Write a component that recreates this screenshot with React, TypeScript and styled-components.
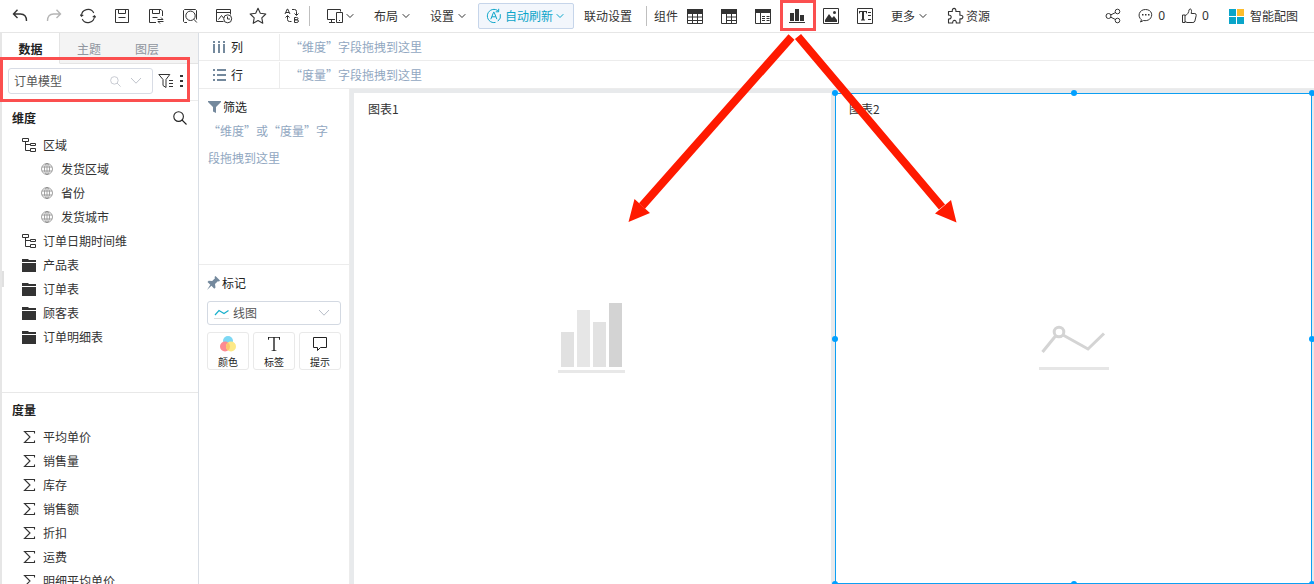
import React from "react";
import styled, { createGlobalStyle } from "styled-components";

const GlobalStyle = createGlobalStyle`
  * { box-sizing: border-box; }
  html, body, #root { height: 100%; }
  body {
    margin: 0;
    background: #fff;
    color: #333;
    font: 12px/18px "Noto Sans CJK SC", "Noto Sans", sans-serif;
    overflow: hidden;
  }
  button, input, select { font: inherit; color: inherit; }
  button { background: none; border: 0; padding: 0; cursor: pointer; }
  h2, ul, p { margin: 0; padding: 0; font-size: inherit; list-style: none; }
  svg { display: block; flex: none; }
`;

const Page = styled.div`
  position: relative;
  display: flex;
  flex-direction: column;
  height: 100%;
  border-left: 2px solid #e6e6e6;
`;

const Toolbar = styled.header`
  display: flex;
  align-items: center;
  flex: none;
  height: 33px;
  margin-left: -2px;
  padding: 0 16px 0 3px;
  background: #fff;
  border-bottom: 1px solid #e6e6e6;
  white-space: nowrap;
`;

const IconButton = styled.button<{ $muted?: boolean }>`
  display: flex;
  align-items: center;
  justify-content: center;
  flex: none;
  width: 34px;
  height: 32px;
  color: ${(p) => (p.$muted ? "#b5b5b5" : "#333")};
`;

const MenuButton = styled.button<{ $gap?: number }>`
  display: flex;
  align-items: center;
  gap: ${(p) => p.$gap ?? 4}px;
  flex: none;
  height: 26px;
  margin-right: 20px;
`;

const RefreshButton = styled(MenuButton)`
  gap: 3px;
  margin: 0 10px 0 -8px;
  padding: 0 9px 0 7px;
  color: #0aa5c9;
  background: #f2f6fc;
  border: 1px solid #c6d5ea;
  border-radius: 2px;
`;

const LinkageButton = styled(MenuButton)`
  margin-right: 14px;
`;

const Divider = styled.span`
  flex: none;
  width: 1px;
  height: 20px;
  background: #bfbfbf;
`;

const MenuGroup = styled.div`
  display: flex;
  padding-left: 17px;
`;

const Label = styled.span`
  padding-left: 7px;
`;

const Tools = styled.div`
  display: flex;
  margin-right: 9px;
`;

const ToolSlot = styled.div`
  position: relative;
`;

const Social = styled.div`
  display: flex;
  align-items: center;
  gap: 17px;
  margin-left: auto;
`;

const SocialButton = styled.button`
  display: flex;
  align-items: center;
  gap: 5px;
  font-family: "Noto Sans", sans-serif;
`;

const SmartButton = styled.button`
  display: flex;
  align-items: center;
  gap: 6px;
  margin-left: 3px;
`;

const Body = styled.div`
  display: flex;
  flex: 1;
  min-height: 0;
`;

const Sidebar = styled.aside`
  display: flex;
  flex-direction: column;
  flex: none;
  width: 197px;
  border-right: 1px solid #d9dee5;
`;

const Tabs = styled.div`
  display: flex;
  flex: none;
  height: 31px;
  background: #f4f4f4;
`;

const Tab = styled.button<{ $active?: boolean }>`
  width: 58px;
  padding-top: 2px;
  color: ${(p) => (p.$active ? "#222" : "#8f959e")};
  font-weight: ${(p) => (p.$active ? 700 : 400)};
  background: ${(p) => (p.$active ? "#fff" : "transparent")};
  border-bottom: 1px solid ${(p) => (p.$active ? "#fff" : "#e4e4e4")};
  border-right: ${(p) => (p.$active ? "1px solid #e4e4e4" : "0")};
`;

const TabsRest = styled.span`
  flex: 1;
  border-bottom: 1px solid #e4e4e4;
`;

const SourceRow = styled.div`
  display: flex;
  align-items: center;
  gap: 5px;
  flex: none;
  height: 37px;
  padding: 0 14px 2px 6px;
  border-bottom: 1px solid #ececec;
`;

const SourceBox = styled.div`
  display: flex;
  align-items: center;
  gap: 9px;
  flex: 1;
  min-width: 0;
  height: 26px;
  padding: 0 10px 0 5px;
  color: #c0c4cc;
  border: 1px solid #d8dce5;
  border-radius: 3px;
`;

const SourceInput = styled.input`
  flex: 1;
  min-width: 0;
  padding: 0;
  color: #555;
  background: none;
  border: 0;
  outline: 0;
`;

const PlainButton = styled.button`
  display: flex;
  flex: none;
`;

const Section = styled.section<{ $fixed?: boolean }>`
  flex: ${(p) => (p.$fixed ? "none" : "1")};
  height: ${(p) => (p.$fixed ? "292px" : "auto")};
  min-height: 0;
  overflow: hidden;
  border-bottom: ${(p) => (p.$fixed ? "1px solid #e8e8e8" : "0")};
`;

const SectionHead = styled.div`
  display: flex;
  align-items: center;
  justify-content: space-between;
  height: 32px;
  padding: 1px 11px 0 10px;
  color: #222;
`;

const Row = styled.li<{ $nested?: boolean }>`
  display: flex;
  align-items: center;
  gap: ${(p) => (p.$nested ? "8px" : "7px")};
  height: 24px;
  padding-left: ${(p) => (p.$nested ? "39px" : "20px")};
`;

const Work = styled.main`
  display: flex;
  flex-direction: column;
  flex: 1;
  min-width: 0;
`;

const Shelf = styled.div`
  display: flex;
  align-items: center;
  flex: none;
  height: 28px;
  border-bottom: 1px solid #ececec;
`;

const ShelfName = styled.div`
  display: flex;
  align-items: center;
  gap: 5px;
  width: 81px;
  height: 26px;
  padding-left: 13px;
  color: #222;
  border-right: 1px solid #ececec;
`;

const ShelfHint = styled.span`
  padding-left: 10px;
  color: #91a7c1;
`;

const Columns = styled.div`
  display: flex;
  flex: 1;
  min-height: 0;
`;

const Settings = styled.div`
  flex: none;
  width: 151px;
  border-right: 1px solid #ececec;
`;

const FilterBox = styled.section`
  height: 176px;
  padding: 8px 20px 0 9px;
  border-bottom: 1px solid #ececec;
`;

const BoxTitle = styled.h2`
  display: flex;
  align-items: center;
  gap: 2px;
  height: 20px;
  font-weight: 400;
  color: #222;
`;

const FilterHint = styled.p`
  line-height: 27px;
  color: #91a7c1;
`;

const MarkBox = styled.section`
  padding: 8px 8px 0 8px;
`;

const ChartType = styled.label`
  display: flex;
  align-items: center;
  height: 24px;
  margin-top: 8px;
  padding: 0 10px 0 6px;
  color: #b8bec9;
  border: 1px solid #d3d9e2;
  border-radius: 3px;
`;

const TypeSelect = styled.select`
  flex: 1;
  min-width: 0;
  padding: 0 0 0 3px;
  color: #555;
  background: none;
  border: 0;
  appearance: none;
`;

const MarkGrid = styled.div`
  display: grid;
  grid-template-columns: repeat(3, 1fr);
  gap: 4px;
  margin-top: 7px;
`;

const MarkButton = styled.button`
  display: flex;
  flex-direction: column;
  align-items: center;
  justify-content: space-between;
  height: 38px;
  padding-top: 2px;
  font-size: 10px;
  line-height: 14px;
  color: #222;
  border: 1px solid #e9e9e9;
  border-radius: 3px;
`;

const Canvas = styled.div`
  display: grid;
  grid-template-columns: 1fr 1fr;
  gap: 4px;
  flex: 1;
  min-width: 0;
  padding: 4px 2px 0 4px;
  background: #e8eaec;
`;

const ChartCard = styled.section<{ $selected?: boolean }>`
  position: relative;
  display: flex;
  flex-direction: column;
  background: #fff;
  box-shadow: ${(p) => (p.$selected ? "inset 0 0 0 1px #0d9ff2" : "none")};
`;

const ChartTitle = styled.h2`
  padding: 7px 14px 0;
  font-weight: 400;
`;

const Placeholder = styled.div`
  display: flex;
  align-items: center;
  justify-content: center;
  flex: 1;
  padding-bottom: 27px;
`;

const Handle = styled.i<{ $x: string; $y: string }>`
  position: absolute;
  left: ${(p) => p.$x};
  top: ${(p) => p.$y};
  width: 6px;
  height: 6px;
  margin: -3px;
  background: #00a0ff;
  border-radius: 50%;
`;

const Grip = styled.i`
  position: absolute;
  left: 0;
  top: 271px;
  width: 2px;
  height: 16px;
  background: #e0e0e0;
`;

const SourceFrame = styled.div`
  position: absolute;
  left: -2px;
  top: 57px;
  width: 190px;
  height: 45px;
  border: 3px solid #fb4f4f;
  pointer-events: none;
`;

const ToolFrame = styled.span`
  position: absolute;
  left: 0;
  top: 0;
  width: 36px;
  height: 31px;
  border: 3px solid #fb4f4f;
  pointer-events: none;
`;

const Arrows = styled.svg`
  position: absolute;
  left: -160px;
  top: 33px;
  z-index: 2;
  pointer-events: none;
`;

type IconProps = { w?: number; h?: number; sw?: number; children: React.ReactNode };

const Icon = ({ w = 16, h = 16, sw = 1, children }: IconProps) => (
  <svg width={w} height={h} viewBox={`0 0 ${w} ${h}`} fill="none" stroke="currentColor" strokeWidth={sw} aria-hidden="true">
    {children}
  </svg>
);

const Solid = ({ w = 16, h = 16, d, fill = "currentColor" }: { w?: number; h?: number; d: string; fill?: string }) => (
  <svg width={w} height={h} viewBox={`0 0 ${w} ${h}`} fill={fill} aria-hidden="true"><path d={d} /></svg>
);

const Chevron = () => <Icon w={8} h={6}><path d="M.7 1.2 4 4.5 7.3 1.2" /></Icon>;
const BigChevron = () => <Icon w={12} h={8}><path d="M1 1 6 6.2 11 1" /></Icon>;
const Undo = () => <Icon sw={1.4}><path d="M5.500 1.800 1.500 6l4 4M1.800 6h6.700c3.800 0 6 2.200 6 7" /></Icon>;
const Redo = () => <Icon sw={1.4}><path d="m10.500 1.800 4 4.200-4 4M14.200 6H7.500c-3.800 0-6 2.200-6 7" /></Icon>;
const Reload = () => (
  <Icon sw={1.1}>
    <path d="M1.500 8A6.500 6.500 0 0 1 13.800 5M14.500 8A6.500 6.500 0 0 1 2.200 11M0 6.500 1.500 8.300 3.300 6.800M16 9.500l-1.500-1.800-1.800 1.500" />
  </Icon>
);
const Save = () => <Icon><path d="M1.500 1.500h13v13h-13zM4.500 1.500v4h7v-4M4.500 9.500h7" /></Icon>;
const SaveAs = () => (
  <Icon>
    <path d="M14.500 8V3L13 1.500H1.500v13H8M4.500 1.500v4h7v-4M4.500 9.500h5M9.500 11.500H15l-2-2M15.500 13.500H10l2 2" />
  </Icon>
);
const Preview = () => (
  <Icon>
    <path d="M5 14.500H2.500l-1-1v-11l1-1h11l1 1v9M11.800 11.200l3 3.300" />
    <circle cx="8.500" cy="7.800" r="4.700" />
  </Icon>
);
const ImageClock = () => (
  <Icon w={18}>
    <path d="M8.500 13.500h-7v-12h14v5M1.500 4.500h14M3.500 11.500l3-4 2 2.500 3-3" />
    <circle cx="12.700" cy="10.800" r="4" fill="#fff" />
    <path d="M12.500 8.500v2.500H15" />
  </Icon>
);
const Star = () => (
  <Icon w={18} h={18} sw={1.1}>
    <path d="m9 1.300 2.300 5 5.500.7-4 3.800 1 5.500L9 13.600l-4.800 2.700 1-5.500-4-3.800 5.500-.7z" strokeLinejoin="round" />
  </Icon>
);
const Swap = () => (
  <Icon>
    <path d="m1 6 2.300-5h.4L6 6M2 4.500h3" />
    <path d="M10.500 9.500v5h2.300q1.700-.2 1.700-1.400t-1.700-1.300h-2.300 2q1.500-.1 1.500-1.200t-1.500-1.100z" />
    <path d="M8 1.500h2.500q2 0 2 2V7M10.500 5.500l2 2 2-2M7.500 13.500h-2q-2 0-2-2V8M1.500 9.500l2-2 2 2" />
  </Icon>
);
const Devices = () => (
  <Icon>
    <path d="M8 11.500H.500v-10h13v2M4.500 11.500v3M2 14.500h6M9.500 4.500h6v10h-6zM12 12.500h1" />
  </Icon>
);
const AutoIcon = () => (
  <Icon>
    <path d="M9.500 14.400a6.600 6.600 0 1 1 3.100-11.100M14.300 6.200a6.600 6.600 0 0 1-2.500 7M12.700.8v3h-3M4.800 11.200l2.800-7h.5l2.800 7M6 8.800h3.700" />
  </Icon>
);
const Grid = () => (
  <Icon>
    <path d="M0 1h16v5H0z" fill="currentColor" stroke="none" />
    <path d="M.5 1.500h15v14H.5zM.5 9h15M.5 12.500h15M5.500 6v9.500M10.500 6v9.500" />
  </Icon>
);
const Pivot = () => (
  <Icon>
    <path d="M0 1h16v5H0z" fill="currentColor" stroke="none" />
    <path d="M.5 1.500h15v14H.5zM5.500 6v9.500M10.500 6v9.500M5.500 9h10M5.500 12.500h10" />
  </Icon>
);
const Detail = () => (
  <Icon>
    <path d="M0 1h16v4H0z" fill="currentColor" stroke="none" />
    <path d="M.5 1.500h15v14H.5zM5.500 5v10.500M7 8.500h3M7 10.500h3M7 12.500h3M11.500 8.500h3M11.500 10.500h3M11.500 12.500h3" />
  </Icon>
);
const Bars = () => <Solid d="M1 5h4v8H1zM6 1h4v12H6zM11 7h4v6h-4zM0 14h16v1H0z" />;
const Picture = () => (
  <Icon>
    <path d="M.5.5h15v15H.5z" />
    <path d="M2 14v-2l4-6 3 4 2-2 3 4v2z" fill="currentColor" stroke="none" />
    <circle cx="11.500" cy="4.500" r="1.500" fill="currentColor" stroke="none" />
  </Icon>
);
const TextIcon = () => (
  <Icon>
    <path d="M.5.5h15v15H.5z" />
    <path d="M2 3h8v2.500h-.8L8.800 4H7v7.500h1v1H4v-1h1V4H3.200l-.4 1.500H2zM11 4h3v1h-3zM11 7h3v1h-3zM11 11h3v1h-3z" fill="currentColor" stroke="none" />
  </Icon>
);
const Puzzle = () => (
  <Icon w={17} h={18} sw={1.1}>
    <path d="M5.300 4.500c-.6-4.200 4.200-4.200 3.600 0h4v3.800c4-.8 4 4.300 0 3.500V16H9.300c.4-3.500-4-3.500-3.600 0H1.500v-4c3.600.4 3.600-4.300 0-3.900V4.500z" strokeLinejoin="round" />
  </Icon>
);
const Share = () => (
  <Icon>
    <circle cx="3.500" cy="8" r="2.500" />
    <circle cx="12.500" cy="3.500" r="2.300" />
    <circle cx="12.500" cy="12.500" r="2.300" />
    <path d="m5.800 6.900 4.600-2.300M5.800 9.200l4.600 2.300" />
  </Icon>
);
const Comment = () => (
  <Icon w={15}>
    <path d="M3.500 11.800C-1 8.500 1 1.500 7.500 1.500s8 6.500 4 9.800c-1.500 1.200-4 1.600-6 1.200l-3 1.500z" />
    <path d="M4 6h1.500v1.500H4zM7 6h1.500v1.500H7zM10 6h1.500v1.500H10z" fill="currentColor" stroke="none" />
  </Icon>
);
const Like = () => (
  <Icon w={15}>
    <path d="M.5 7H3v7.500H.5zM3 7.500c2.500-.5 4-3.500 4-5.500 1-2.200 3.400-1 2.200 3.500h3.600q1.700.2 1.400 2l-1.300 5.500q-.4 1.500-2 1.500H5l-2-1" />
  </Icon>
);
const Squares = () => (
  <svg width="15" height="15" viewBox="0 0 15 15" aria-hidden="true">
    <path d="M0 0h7v7H0zM0 8h7v7H0zM8 8h7v7H8z" fill="#0aa5c9" />
    <path d="M8 0h7v7H8z" fill="#fdbc2c" />
  </svg>
);
const Search = ({ size = 14 }: { size?: number }) => (
  <svg width={size} height={size} viewBox="0 0 14 14" fill="none" stroke="currentColor" strokeWidth="1.100" aria-hidden="true">
    <circle cx="5.600" cy="5.600" r="4.800" />
    <path d="m9 9 4.500 4.500" />
  </svg>
);
const FilterList = () => <Icon h={14}><path d="M.8.5h11L8 5.500v8l-3-2v-6zM11 6.500h4M11 9.500h4M11 12.500h4" /></Icon>;
const Dots = () => <Solid w={5} h={14} d="M1 1h3v2H1zM1 6h3v2H1zM1 11h3v2H1z" />;
const Tree = () => <Icon w={14} h={14}><path d="M.5.5h6v3h-6zM3.500 3.500v9h5M3.500 6.500h5M8.500 5.500h5v2h-5zM8.500 10.500h5v3h-5z" /></Icon>;
const Globe = () => (
  <svg width="12" height="12" viewBox="0 0 12 12" fill="none" stroke="#8a8a8a" strokeWidth=".8" aria-hidden="true">
    <circle cx="6" cy="6" r="5.500" />
    <ellipse cx="6" cy="6" rx="2.500" ry="5.500" />
    <path d="M1 4h10M1 8h10M6 .5v11" />
  </svg>
);
const Folder = () => <Solid w={14} h={13} d="M0 0h6l1 1h7v2H0zM0 4h14v9H0z" />;
const Sigma = () => <Icon w={14} h={14} sw={1.1}><path d="M12.500 3.500v-2h-10L8 7l-5.500 5.500h10v-2" /></Icon>;
const ColumnsIcon = () => <Solid w={14} h={12} fill="#74899d" d="M1 0h2v2H1zM1 3h2v9H1zM6 0h2v2H6zM6 3h2v9H6zM11 0h2v2h-2zM11 3h2v9h-2z" />;
const RowsIcon = () => <Solid w={14} h={12} fill="#74899d" d="M1 0h2v2H1zM5 0h9v2H5zM1 5h2v2H1zM5 5h9v2H5zM1 10h2v2H1zM5 10h9v2H5z" />;
const Funnel = () => <Solid w={13} h={12} fill="#74899d" d="M0 0h13v1L8 6v6l-3-1.500V6L0 1z" />;
const Pin = () => <Solid w={13} h={14} fill="#74899d" d="m8.500 0 4.500 4.500-1 1-1.200-.2L8 8.100l.5 3.400-1.200 1.200-2.900-2.900L0 14l3.300-5.300L.5 5.900l1.200-1.200 3.500.4L8 2.300 7.500 1z" />;
const LineIcon = () => (
  <Icon h={14}>
    <path d="M1 9l4-4.500 5 3 4.500-3" stroke="#18b0cc" strokeWidth="1.200" />
    <path d="M0 12.500h15" stroke="#ddd" />
  </Icon>
);
const ColorIcon = () => (
  <svg width="18" height="18" viewBox="0 0 18 18" aria-hidden="true">
    <circle cx="9" cy="6" r="5" fill="#7dd8f4" />
    <circle cx="6" cy="11.500" r="5" fill="#fd8b92" />
    <circle cx="12" cy="11.500" r="5" fill="#fde987" />
    <path d="M9 7.500a5 5 0 0 1 0 8 5 5 0 0 1 0-8z" fill="#fbc66e" />
  </svg>
);
const LetterIcon = () => <Solid h={18} d="M2 2h12v3h-.6L12.800 2.800H8.700v12.400l1.800.3v.5h-5v-.5l1.800-.3V2.800H3.200L2.600 5H2z" />;
const TipIcon = () => <Icon h={18}><path d="M1.500 2.500h13v10h-6l-3 3v-3h-4z" /></Icon>;
const BarPlaceholder = () => (
  <svg width="69" height="72" viewBox="0 0 69 72" aria-hidden="true">
    <path d="M3 30h13v35H3z" fill="#e1e1e1" />
    <path d="M19 8h13v57H19z" fill="#e6e6e6" />
    <path d="M35 20h13v45H35z" fill="#e2e2e2" />
    <path d="M51 1h13v64H51z" fill="#d3d3d3" />
    <path d="M0 68h67v3H0z" fill="#e8e8e8" />
  </svg>
);
const LinePlaceholder = () => (
  <svg width="70" height="72" viewBox="0 0 70 72" fill="none" stroke="#d4d4d4" strokeWidth="3" aria-hidden="true">
    <path d="M3.500 50 16.500 34M24 33l25 14 16-15.500" />
    <circle cx="20" cy="30" r="4.800" />
    <path d="M0 66.500h70" stroke="#e6e6e6" />
  </svg>
);

const actions = [
  ["撤销", Undo], ["重做", Redo], ["刷新", Reload], ["保存", Save], ["另存为", SaveAs],
  ["预览", Preview], ["快照", ImageClock], ["收藏", Star], ["替换", Swap],
] as const;
const widgets = [
  ["表格", Grid], ["透视表", Pivot], ["明细表", Detail], ["图表", Bars], ["图片", Picture], ["文本", TextIcon],
] as const;
const dimensions = [
  ["区域", Tree, false], ["发货区域", Globe, true], ["省份", Globe, true], ["发货城市", Globe, true],
  ["订单日期时间维", Tree, false], ["产品表", Folder, false], ["订单表", Folder, false],
  ["顾客表", Folder, false], ["订单明细表", Folder, false],
] as const;
const measures = ["平均单价", "销售量", "库存", "销售额", "折扣", "运费", "明细平均单价"];
const handles = [
  ["0", "0"], ["50%", "0"], ["100%", "0"], ["0", "50%"],
  ["100%", "50%"], ["0", "100%"], ["50%", "100%"], ["100%", "100%"],
];

const ChartToolMarks = () => (
  <>
    <ToolFrame />
    <Arrows width="340" height="192" viewBox="0 0 340 192" stroke="#ff1a00" strokeWidth="8" aria-hidden="true">
      <path d="M171.500 4 22 173M178 3.500 322 174" />
      <path d="m8.500 189 6-23L30 180zM336.500 189.500 331 167l-16 13.500z" fill="#ff1a00" stroke="none" />
    </Arrows>
  </>
);

export default function App() {
  return (
    <>
      <GlobalStyle />
      <Page lang="zh-CN">
        <Toolbar>
          {actions.map(([name, Glyph]) => (
            <IconButton key={name} aria-label={name} $muted={name === "重做"}><Glyph /></IconButton>
          ))}
          <Divider />
          <MenuGroup>
            <MenuButton $gap={3} aria-label="设备"><Devices /><Chevron /></MenuButton>
            <MenuButton>布局<Chevron /></MenuButton>
            <MenuButton>设置<Chevron /></MenuButton>
          </MenuGroup>
          <RefreshButton><AutoIcon />自动刷新<Chevron /></RefreshButton>
          <LinkageButton>联动设置</LinkageButton>
          <Divider />
          <Label>组件</Label>
          <Tools>
            {widgets.map(([name, Glyph]) => (
              <ToolSlot key={name}>
                <IconButton aria-label={name}><Glyph /></IconButton>
                {name === "图表" && <ChartToolMarks />}
              </ToolSlot>
            ))}
          </Tools>
          <MenuButton>更多<Chevron /></MenuButton>
          <MenuButton $gap={2}><Puzzle />资源</MenuButton>
          <Social>
            <SocialButton aria-label="分享"><Share /></SocialButton>
            <SocialButton><Comment />0</SocialButton>
            <SocialButton><Like />0</SocialButton>
            <SmartButton><Squares />智能配图</SmartButton>
          </Social>
        </Toolbar>
        <Body>
          <Sidebar>
            <Tabs><Tab $active>数据</Tab><Tab>主题</Tab><Tab>图层</Tab><TabsRest /></Tabs>
            <SourceRow>
              <SourceBox>
                <SourceInput aria-label="数据模型" defaultValue="订单模型" />
                <Search size={11} />
                <BigChevron />
              </SourceBox>
              <PlainButton aria-label="筛选字段"><FilterList /></PlainButton>
              <PlainButton aria-label="更多操作"><Dots /></PlainButton>
            </SourceRow>
            <Section $fixed>
              <SectionHead><h2>维度</h2><PlainButton aria-label="搜索"><Search /></PlainButton></SectionHead>
              <ul>{dimensions.map(([name, Glyph, nested]) => <Row key={name} $nested={nested}><Glyph />{name}</Row>)}</ul>
            </Section>
            <Section>
              <SectionHead><h2>度量</h2></SectionHead>
              <ul>{measures.map((name) => <Row key={name}><Sigma />{name}</Row>)}</ul>
            </Section>
          </Sidebar>
          <Work>
            <Shelf><ShelfName><ColumnsIcon />列</ShelfName><ShelfHint>“维度”字段拖拽到这里</ShelfHint></Shelf>
            <Shelf><ShelfName><RowsIcon />行</ShelfName><ShelfHint>“度量”字段拖拽到这里</ShelfHint></Shelf>
            <Columns>
              <Settings>
                <FilterBox>
                  <BoxTitle><Funnel />筛选</BoxTitle>
                  <FilterHint>“维度”或“度量”字段拖拽到这里</FilterHint>
                </FilterBox>
                <MarkBox>
                  <BoxTitle><Pin />标记</BoxTitle>
                  <ChartType>
                    <LineIcon />
                    <TypeSelect aria-label="图表类型"><option>线图</option></TypeSelect>
                    <BigChevron />
                  </ChartType>
                  <MarkGrid>
                    <MarkButton><ColorIcon />颜色</MarkButton>
                    <MarkButton><LetterIcon />标签</MarkButton>
                    <MarkButton><TipIcon />提示</MarkButton>
                  </MarkGrid>
                </MarkBox>
              </Settings>
              <Canvas>
                <ChartCard>
                  <ChartTitle>图表1</ChartTitle>
                  <Placeholder><BarPlaceholder /></Placeholder>
                </ChartCard>
                <ChartCard $selected>
                  <ChartTitle>图表2</ChartTitle>
                  <Placeholder><LinePlaceholder /></Placeholder>
                  {handles.map(([x, y]) => <Handle key={x + y} $x={x} $y={y} />)}
                </ChartCard>
              </Canvas>
            </Columns>
          </Work>
        </Body>
        <Grip />
        <SourceFrame />
      </Page>
    </>
  );
}
